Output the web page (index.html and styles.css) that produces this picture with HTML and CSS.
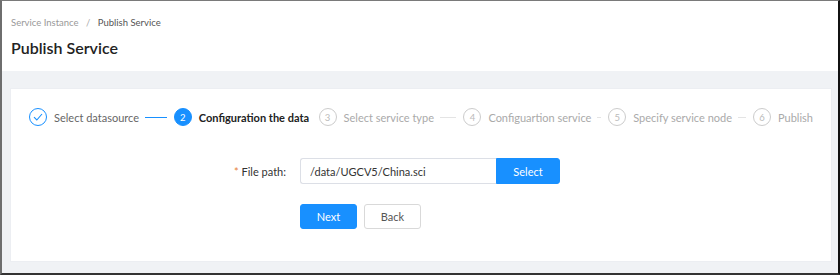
FILE: index.html
```html
<!DOCTYPE html>
<html lang="en">
<head>
    <meta charset="UTF-8">
    <title>Publish Service</title>
    <link rel="stylesheet" href="styles.css">
</head>
<body>
    <div class="frame">
        <div class="header">
            <div class="breadcrumb">
                <span class="crumb">Service Instance</span>
                <span class="sep">/</span>
                <span class="crumb current">Publish Service</span>
            </div>
            <h1 class="title">Publish Service</h1>
        </div>
        <div class="content">
            <div class="card">
                <div class="steps">
                    <div class="step done">
                        <span class="icon">
                            <svg width="10" height="8" viewBox="0 0 10 8"><path d="M1 4.2 L3.8 7 L9 1" fill="none" stroke="#1890ff" stroke-width="1.1"/></svg>
                        </span>
                        <span class="label">Select datasource</span>
                        <span class="tail"></span>
                    </div>
                    <div class="step active">
                        <span class="icon">2</span>
                        <span class="label">Configuration the data</span>
                        <span class="tail"></span>
                    </div>
                    <div class="step">
                        <span class="icon">3</span>
                        <span class="label">Select service type</span>
                        <span class="tail"></span>
                    </div>
                    <div class="step">
                        <span class="icon">4</span>
                        <span class="label">Configuartion service</span>
                        <span class="tail"></span>
                    </div>
                    <div class="step">
                        <span class="icon">5</span>
                        <span class="label">Specify service node</span>
                        <span class="tail"></span>
                    </div>
                    <div class="step last">
                        <span class="icon">6</span>
                        <span class="label">Publish</span>
                    </div>
                </div>

                <div class="form-row">
                    <label class="form-label"><span class="req">*</span> File path:</label>
                    <div class="input-group">
                        <input class="input" type="text" value="/data/UGCV5/China.sci">
                        <button class="btn primary addon">Select</button>
                    </div>
                </div>
                <div class="actions">
                    <button class="btn primary">Next</button>
                    <button class="btn">Back</button>
                </div>
            </div>
        </div>
    </div>
</body>
</html>
```

FILE: styles.css
```css
html, body {
    margin: 0;
    height: 100%;
}
body {
    font-family: Lato, "Liberation Sans", sans-serif;
    background: #fff;
}
.frame {
    box-sizing: border-box;
    height: 275px;
    border-top: 1px solid #7a7a7a;
    border-left: 2px solid #6e6e6e;
    border-right: 2px solid #111;
    border-bottom: 2px solid #333;
    display: flex;
    flex-direction: column;
}
.header {
    background: #fff;
    padding: 14px 9px 0;
    height: 56px;
    flex: none;
}
.breadcrumb {
    font-size: 9.5px;
    line-height: 16px;
    color: #999;
}
.breadcrumb .sep {
    margin: 0 5px;
    color: #aaa;
}
.breadcrumb .current {
    color: #555;
}
.title {
    margin: 6px 0 0;
    font-size: 16px;
    font-weight: 600;
    color: #222;
    line-height: 22px;
}
.content {
    flex: 1;
    background: #f0f2f5;
    padding: 17px 6px 8px 8px;
}
.card {
    background: #fff;
    height: 174px;
    box-sizing: border-box;
    padding: 19px 18px 0 18px;
    border: 1px solid #eceef2;
}
.steps {
    display: flex;
    align-items: center;
    height: 18px;
}
.step {
    flex: 1 1 0;
    display: flex;
    align-items: center;
    min-width: 0;
}
.step.last {
    flex: none;
}
.icon {
    box-sizing: border-box;
    width: 18px;
    height: 18px;
    border-radius: 50%;
    border: 1px solid #ccc;
    color: #bbb;
    font-size: 9.5px;
    display: flex;
    align-items: center;
    justify-content: center;
    flex: none;
}
.label {
    margin-left: 7px;
    font-size: 11px;
    color: #aaa;
    white-space: nowrap;
}
.tail {
    flex: 1;
    min-width: 0;
    height: 1px;
    background: #e4e4e4;
    margin: 0 7px 0 6px;
}
.step.done .icon {
    border-color: #1890ff;
}
.step.done .label {
    color: #666;
}
.step.done .tail {
    background: #1890ff;
}
.step.active .icon {
    background: #1890ff;
    border-color: #1890ff;
    color: #fff;
}
.step.active .label {
    color: #222;
    font-weight: 700;
}
.form-row {
    display: flex;
    align-items: center;
    margin-top: 32px;
}
.form-label {
    width: 271px;
    text-align: right;
    padding-right: 14px;
    box-sizing: border-box;
    font-size: 11px;
    color: #333;
}
.req {
    color: #e6803a;
}
.input-group {
    display: flex;
    height: 26px;
}
.input {
    box-sizing: border-box;
    width: 196px;
    height: 26px;
    border: 1px solid #dcdfe6;
    border-right: none;
    border-radius: 3px 0 0 3px;
    padding: 0 9px;
    font-family: inherit;
    font-size: 11px;
    color: #333;
    outline: none;
}
.btn {
    box-sizing: border-box;
    height: 25px;
    width: 57px;
    border: 1px solid #d9d9d9;
    border-radius: 3px;
    background: #fff;
    color: #555;
    font-family: inherit;
    font-size: 11px;
    padding: 0;
}
.btn.primary {
    background: #1890ff;
    border-color: #1890ff;
    color: #fff;
}
.btn.addon {
    width: 64px;
    height: 26px;
    border-radius: 0 3px 3px 0;
}
.actions {
    display: flex;
    gap: 7px;
    margin-top: 20px;
    padding-left: 271px;
}
```
